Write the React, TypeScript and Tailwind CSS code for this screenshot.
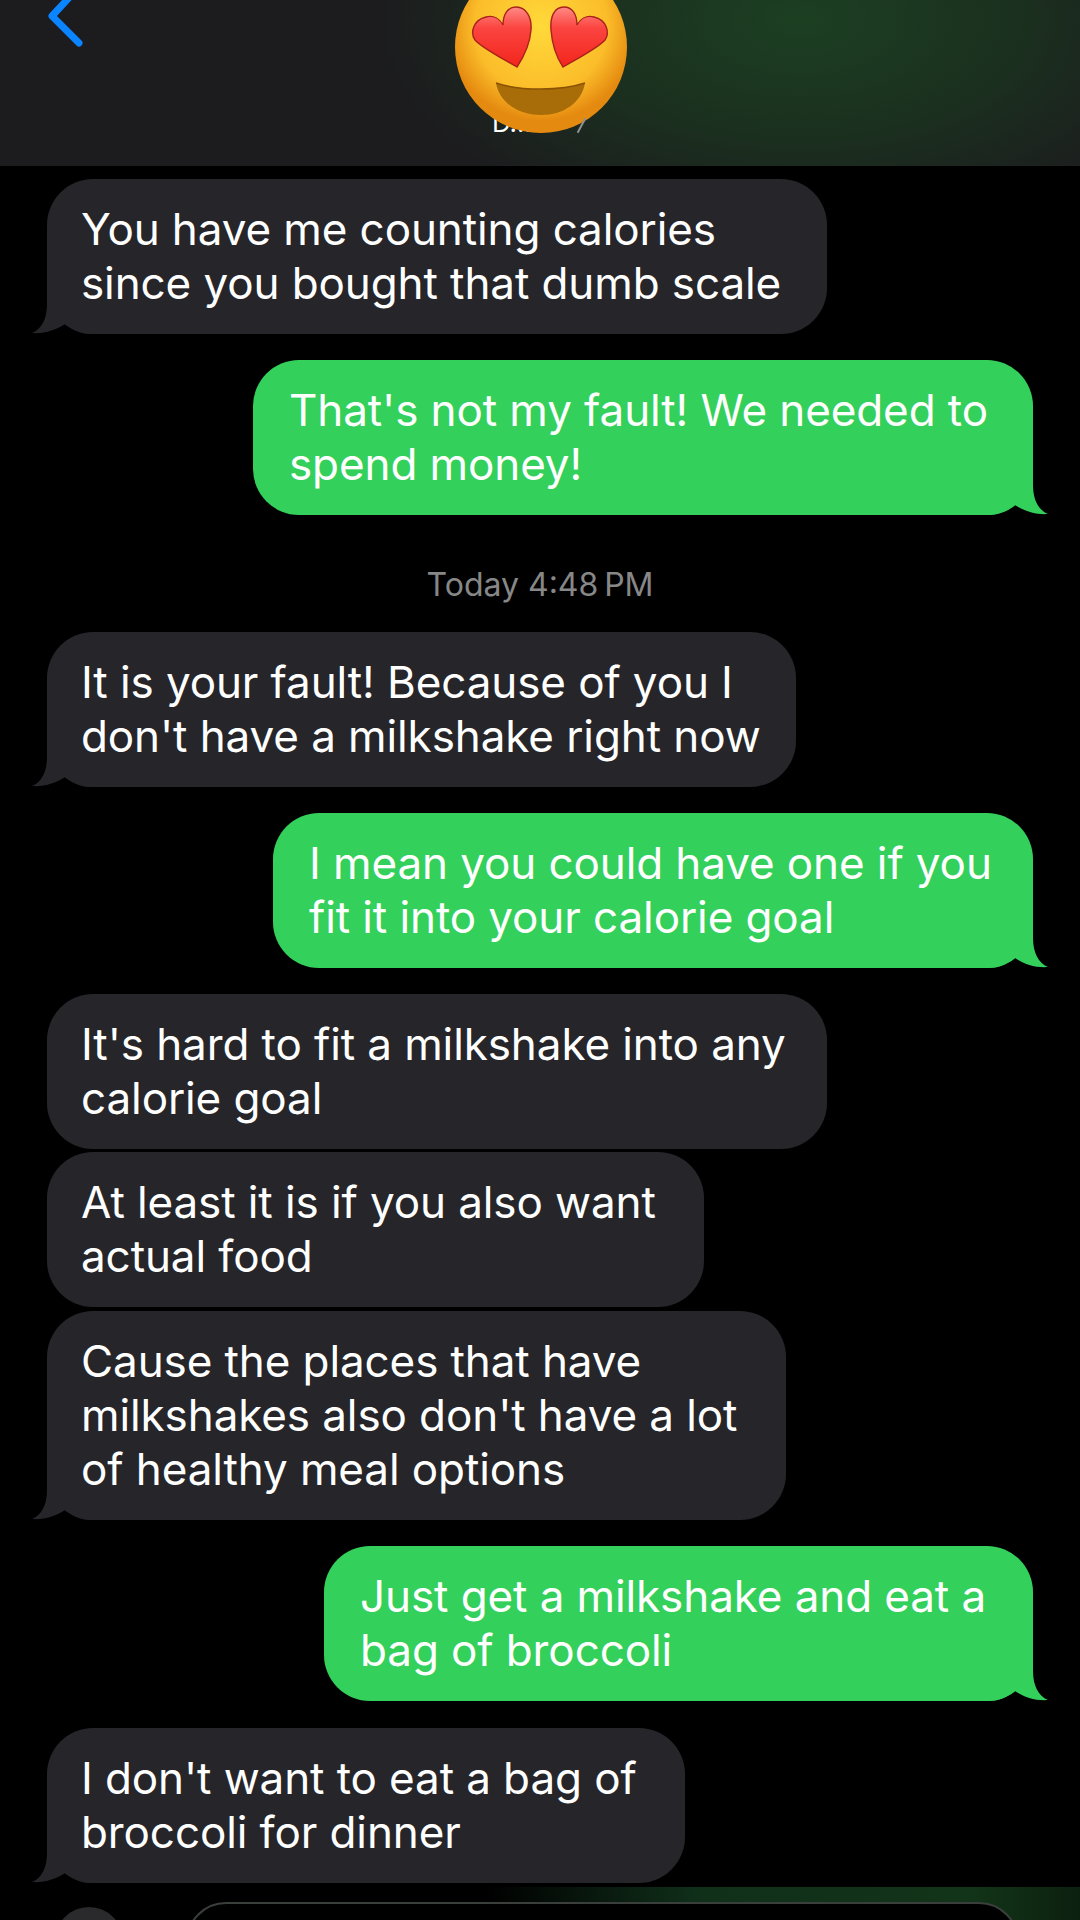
import React from "react";

type Msg = {
  lines: string[];
  mine?: boolean;
  tail?: boolean;
  gap: string;
  width: string;
};

const messages: Msg[] = [
  { lines: ["You have me counting calories", "since you bought that dumb scale"], tail: true, gap: "mt-[13px]", width: "w-[780px]" },
  { lines: ["That's not my fault! We needed to", "spend money!"], mine: true, tail: true, gap: "mt-[26px]", width: "w-[780px]" },
];

const afterToday: Msg[] = [
  { lines: ["It is your fault! Because of you I", "don't have a milkshake right now"], tail: true, gap: "mt-[30px]", width: "w-[749px]" },
  { lines: ["I mean you could have one if you", "fit it into your calorie goal"], mine: true, tail: true, gap: "mt-[26px]", width: "w-[760px]" },
  { lines: ["It's hard to fit a milkshake into any", "calorie goal"], gap: "mt-[26px]", width: "w-[780px]" },
  { lines: ["At least it is if you also want", "actual food"], gap: "mt-[3px]", width: "w-[657px]" },
  { lines: ["Cause the places that have", "milkshakes also don't have a lot", "of healthy meal options"], tail: true, gap: "mt-[4px]", width: "w-[739px]" },
  { lines: ["Just get a milkshake and eat a", "bag of broccoli"], mine: true, tail: true, gap: "mt-[26px]", width: "w-[709px]" },
  { lines: ["I don't want to eat a bag of", "broccoli for dinner"], tail: true, gap: "mt-[27px]", width: "w-[638px]" },
];

const Tail = ({ mine }: { mine?: boolean }) =>
  mine ? (
    <svg className="absolute bottom-0 right-[-15px]" width="60" height="50" viewBox="0 0 60 50">
      <path d="M45 0L45 20C45 34 50 45 60 49C48 50 36 46 27 40C18 47 10 50 0 50L0 0Z" fill="#33d05c" />
    </svg>
  ) : (
    <svg className="absolute bottom-0 left-[-15px]" width="60" height="50" viewBox="0 0 60 50">
      <path d="M15 0L15 20C15 34 10 45 0 49C12 50 24 46 33 40C42 47 50 50 60 50L60 0Z" fill="#26262a" />
    </svg>
  );

const Bubble = ({ msg }: { msg: Msg }) => (
  <div className={`flex ${msg.gap} ${msg.mine ? "justify-end" : "justify-start"}`}>
    <div
      className={`relative rounded-[46px] pb-[24px] pr-[30px] pt-[23px] text-[44px] leading-[54px] tracking-[-0.1px] text-white whitespace-nowrap ${msg.width} ${
        msg.mine ? "bg-[#33d05c] pl-[36px]" : "bg-[#26262a] pl-[34px]"
      }`}
    >
      {msg.tail && <Tail mine={msg.mine} />}
      <div className="relative">
        {msg.lines.map((l) => (
          <div key={l}>{l}</div>
        ))}
      </div>
    </div>
  </div>
);

const HeartEyes = () => (
  <svg className="absolute left-[450px] top-0" width="180" height="140" viewBox="450 0 180 140">
    <defs>
      <radialGradient id="face" cx="50%" cy="38%" r="55%">
        <stop offset="0%" stopColor="#ffd93a" />
        <stop offset="70%" stopColor="#fbbd2a" />
        <stop offset="100%" stopColor="#e58a10" />
      </radialGradient>
      <linearGradient id="heart" x1="0" y1="0" x2="0" y2="1">
        <stop offset="0%" stopColor="#ff8a86" />
        <stop offset="35%" stopColor="#fb4440" />
        <stop offset="100%" stopColor="#f2261c" />
      </linearGradient>
    </defs>
    <circle cx="541" cy="47" r="86" fill="url(#face)" />
    <path
      d="M517 67C505 60 482 48 475 40C470 33 473 20 486 17C494 15 500 19 503 25C503 14 508 7 516 7C526 7 532 17 531 30C530 44 523 58 517 67Z"
      fill="url(#heart)"
      stroke="#a8221a"
      strokeWidth="1.4"
    />
    <path
      d="M563 67C575 60 598 48 605 40C610 33 607 20 594 17C586 15 580 19 577 25C577 14 572 7 564 7C554 7 550 17 551 30C552 44 557 58 563 67Z"
      fill="url(#heart)"
      stroke="#a8221a"
      strokeWidth="1.4"
    />
    <path d="M496 83C520 91 561 91 585 83C582 102 564 115 541 115C518 115 499 102 496 83Z" fill="#a86c08" />
    <path d="M496 83C520 91 561 91 585 83" fill="none" stroke="#8a5205" strokeWidth="1.5" />
  </svg>
);

export default function App() {
  return (
    <div
      className="relative flex h-[1920px] w-[1080px] flex-col overflow-hidden bg-black"
      style={{ fontFamily: "Inter, 'Liberation Sans', sans-serif" }}
    >
      {/* HEADER */}
      <div className="relative h-[166px] shrink-0 bg-[radial-gradient(ellipse_420px_220px_at_800px_20px,#1c3f22_0%,#1b2f1f_55%,#1c1c1e_100%)]">
        <svg className="absolute left-[42px] top-0" width="50" height="50" viewBox="0 0 50 50">
          <path d="M36 -12L10 16L37 43" fill="none" stroke="#0a84ff" strokeWidth="7" strokeLinecap="round" strokeLinejoin="round" />
        </svg>
        <div className="absolute left-[492px] top-[110px] text-[26px] leading-[26px] text-white">D...</div>
        <HeartEyes />
        <svg className="absolute left-[574px] top-[116px]" width="14" height="18" viewBox="0 0 14 18">
          <path d="M11 3L4 16" fill="none" stroke="#8e8e93" strokeWidth="2" strokeLinecap="round" />
        </svg>
      </div>

      {/* MESSAGES */}
      <div className="flex flex-col pl-[47px] pr-[47px]">
        {messages.map((m) => (
          <Bubble key={m.lines[0]} msg={m} />
        ))}
        <div className="mt-[53px] text-center text-[32px] leading-[34px] text-[#878787]">
          Today 4:48{"\u2009"}PM
        </div>
        {afterToday.map((m) => (
          <Bubble key={m.lines[0]} msg={m} />
        ))}
      </div>

      {/* INPUT BAR */}
      <div className="mt-[4px] flex flex-1 gap-[63px] bg-[linear-gradient(90deg,#000000_45%,#10301a_65%,#123418_90%,#0c200f_100%)] pl-[55px] pr-[61px] pt-[15px]">
        <div className="mt-[5px] h-[68px] w-[68px] shrink-0 rounded-full bg-[#2a2a2c]" />
        <div className="h-[70px] flex-1 rounded-t-[40px] border-2 border-[#3a3f3b] bg-black" />
      </div>
    </div>
  );
}
